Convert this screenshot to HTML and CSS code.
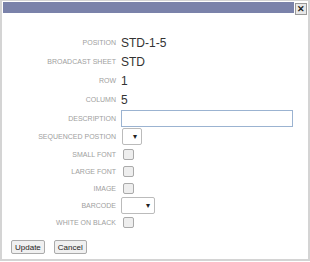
FILE: index.html
```html
<!DOCTYPE html>
<html lang="en">
<head>
    <meta charset="UTF-8">
    <title>Edit Position</title>
    <link rel="stylesheet" href="styles.css">
</head>
<body>
    <div class="dialog">
        <!-- Заголовок окна -->
        <div class="titlebar">
            <span class="close">&#x2715;</span>
        </div>

        <div class="form">
            <div class="row"><span class="label">Position</span><span class="value">STD-1-5</span></div>
            <div class="row"><span class="label">Broadcast sheet</span><span class="value">STD</span></div>
            <div class="row"><span class="label">Row</span><span class="value">1</span></div>
            <div class="row"><span class="label">Column</span><span class="value">5</span></div>
            <div class="row row-input"><span class="label">Description</span><input class="text" type="text"></div>
            <div class="row row-select"><span class="label">Sequenced postion</span><span class="select small">&#x25BE;</span></div>
            <div class="row row-check"><span class="label">Small font</span><span class="check"></span></div>
            <div class="row row-check"><span class="label">Large font</span><span class="check"></span></div>
            <div class="row row-check"><span class="label">Image</span><span class="check"></span></div>
            <div class="row row-check"><span class="label">Barcode</span><span class="select wide">&#x25BE;</span></div>
            <div class="row row-check"><span class="label">White on black</span><span class="check"></span></div>
        </div>

        <div class="buttons">
            <button>Update</button>
            <button>Cancel</button>
        </div>
    </div>
</body>
</html>
```

FILE: styles.css
```css
body {
    margin: 0;
    font-family: "Liberation Sans", Arial, sans-serif;
    background: #fff;
}

.dialog {
    width: 306px;
    height: 258px;
    border: 2px solid #d4d4d4;
    border-top-width: 1px;
    background: #fff;
    position: relative;
}

.titlebar {
    height: 11px;
    margin: 1px 14px 0 1px;
    background: #7a82aa;
}

.close {
    position: absolute;
    top: 2px;
    right: 1px;
    width: 10px;
    height: 10px;
    border: 1px solid #999;
    background: #e8e8e8;
    font-size: 9px;
    line-height: 10px;
    text-align: center;
    font-weight: bold;
    color: #222;
}

.form {
    padding-top: 20px;
}

.row {
    display: flex;
    align-items: center;
    height: 19px;
}

.label {
    width: 114px;
    text-align: right;
    padding-right: 5px;
    flex-shrink: 0;
    font-size: 7px;
    text-transform: uppercase;
    color: #a0a0a0;
}

.value {
    font-size: 12px;
    color: #333;
}

.row-input {
    height: 18px;
}

.text {
    width: 172px;
    height: 17px;
    box-sizing: border-box;
    border: 1px solid #9bb3d1;
    margin: 0;
    padding: 0 2px;
}

.row-select {
    height: 19px;
}

.row-check {
    height: 17px;
}

.select {
    display: inline-block;
    box-sizing: border-box;
    height: 17px;
    border: 1px solid #bbb;
    border-radius: 2px;
    font-size: 8px;
    line-height: 15px;
    text-align: right;
    padding-right: 4px;
    color: #222;
}

.small {
    width: 20px;
    margin-left: 1px;
}

.wide {
    width: 34px;
}

.check {
    display: inline-block;
    width: 9px;
    height: 9px;
    margin-left: 2px;
    border: 1px solid #aaa;
    border-radius: 2px;
    background: #eee;
}

.buttons {
    display: flex;
    gap: 9px;
    padding: 9px 0 0 9px;
}

button {
    font-family: "Liberation Sans", Arial, sans-serif;
    font-size: 8px;
    height: 14px;
    padding: 0 3px;
    border: 1px solid #aaa;
    border-radius: 2px;
    background: #f0f0f0;
    color: #222;
}
```
